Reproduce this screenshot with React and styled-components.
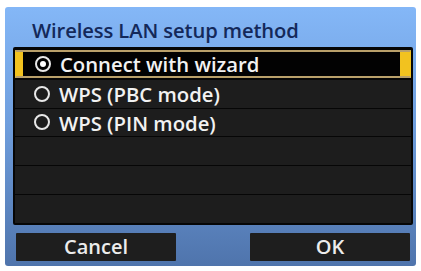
import styled, { createGlobalStyle } from "styled-components";

const GlobalStyle = createGlobalStyle`
  html, body {
    margin: 0;
    padding: 0;
    background: #ffffff;
  }
  body {
    font-family: "Open Sans", "DejaVu Sans", sans-serif;
  }
`;

const Screen = styled.div`
  margin: 7px 5px 0 5px;
  width: 411px;
  height: 259px;
  box-sizing: border-box;
  border-radius: 3px;
  background: linear-gradient(180deg, #84b7f7 0%, #6f9edd 45%, #4f74ac 100%);
  display: flex;
  flex-direction: column;
  padding: 0 3px 0 8px;
`;

const Title = styled.h1`
  margin: 0;
  height: 40px;
  line-height: 46px;
  padding-left: 19px;
  font-size: 20.2px;
  font-weight: 600;
  color: #14295a;
  letter-spacing: -0.1px;
`;

const List = styled.div`
  border: 2px solid #060606;
  border-radius: 2px;
  background: #060606;
  display: flex;
  flex-direction: column;
  gap: 1px;
`;

const Row = styled.div`
  height: 27.8px;
  display: flex;
  align-items: center;
  gap: 9px;
  padding-left: 19px;
  background: ${(p) => (p.$selected ? "#020202" : "#1d1d1d")};
  color: #f2f2f2;
  font-size: 20.3px;
  font-weight: 600;
  box-sizing: border-box;
  ${(p) =>
    p.$selected &&
    `
    border-top: 2px solid #b9a06a;
    border-bottom: 2px solid #b9a06a;
    margin: 1px 0;
    box-shadow: inset 7px 0 0 #f2c21f, inset -10px 0 0 #f2c21f;
    border-left: 1px solid #f2c21f;
    border-right: 1px solid #f2c21f;
  `}
`;

const Radio = styled.span`
  flex: none;
  width: 16px;
  height: 16px;
  border-radius: 50%;
  border: 2px solid #e8e8e8;
  box-sizing: border-box;
  display: flex;
  align-items: center;
  justify-content: center;
  &::after {
    content: "";
    display: ${(p) => (p.$checked ? "block" : "none")};
    width: 6px;
    height: 6px;
    border-radius: 50%;
    background: #ffffff;
  }
`;

const ButtonBar = styled.div`
  display: flex;
  justify-content: space-between;
  margin-top: 8px;
  padding: 0 3px 0 3px;
`;

const Button = styled.div`
  width: 160px;
  height: 28px;
  background: #1e1e1e;
  color: #ececec;
  font-size: 20px;
  font-weight: 600;
  display: flex;
  align-items: center;
  justify-content: center;
  border-radius: 1px;
`;

const options = [
  { label: "Connect with wizard", selected: true },
  { label: "WPS (PBC mode)" },
  { label: "WPS (PIN mode)" },
  {},
  {},
  {},
];

export default function App() {
  return (
    <>
      <GlobalStyle />
      <Screen>
        <Title>Wireless LAN setup method</Title>
        <List>
          {options.map((o, i) => (
            <Row key={i} $selected={o.selected}>
              {o.label && <Radio $checked={o.selected} />}
              {o.label}
            </Row>
          ))}
        </List>
        <ButtonBar>
          <Button>Cancel</Button>
          <Button>OK</Button>
        </ButtonBar>
      </Screen>
    </>
  );
}
